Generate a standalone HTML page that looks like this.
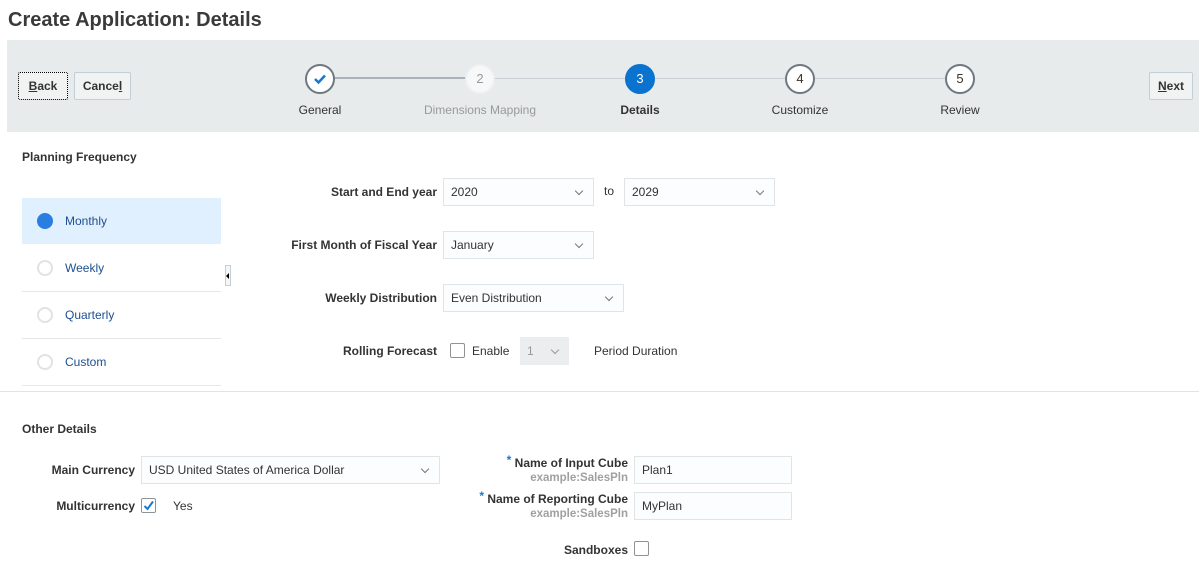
<!DOCTYPE html>
<html><head><style>
body{margin:0;width:1199px;height:575px;background:#fff;font-family:"Liberation Sans",Arial,sans-serif;font-size:12px;color:#333;position:relative;overflow:hidden}
.a{position:absolute}
.title{left:8px;top:9px;font-size:20px;font-weight:bold;color:#3a3a3a}
.band{left:7px;top:40px;width:1192px;height:92px;background:#e8ebec}
.btn{position:absolute;height:26px;border:1px solid #c4ced7;background:#f1f3f3;border-radius:2px;font-weight:bold;font-size:12px;line-height:26px;text-align:center;color:#333}
.circ{position:absolute;width:26px;height:26px;border-radius:50%;border:2px solid #6f7880;background:#fff;text-align:center;line-height:26px;font-size:13px;color:#333}
.lbl{position:absolute;width:160px;text-align:center;font-size:12px}
.line{position:absolute;top:77px;height:2px;background:#a9b2ba}
.sel{position:absolute;height:26px;border:1px solid #dfe4e7;background:#fcfdfe;box-sizing:border-box;padding-left:7px;line-height:25px;font-size:12px}
.chev{position:absolute;right:11px;top:8px;width:5px;height:5px;border-right:1px solid #777;border-bottom:1px solid #777;transform:rotate(45deg)}
.fl{position:absolute;font-weight:bold;text-align:right;font-size:12px}
.h{font-weight:bold;font-size:12px}
.item{position:absolute;left:22px;width:199px;height:46px;border-bottom:1px solid #e5e8ea;color:#1d4f91;font-size:12px;line-height:46px}
.item span.r{position:absolute;left:15px;top:15px;width:16px;height:16px;border-radius:50%;border:2px solid #e2e2e2;box-sizing:border-box}
.item span.t{position:absolute;left:43px}
.cb{position:absolute;width:15px;height:15px;border:1px solid #8d9499;border-radius:2px;background:#fff;box-sizing:border-box}
</style></head><body>
<div class="a title">Create Application: Details</div>
<div class="a band"></div>
<div class="btn" style="left:18px;top:72px;width:48px;border:1px dotted #000"><u>B</u>ack</div>
<div class="btn" style="left:74px;top:72px;width:55px">Cance<u>l</u></div>
<div class="btn" style="left:1149px;top:72px;width:42px"><u>N</u>ext</div>

<div class="line" style="left:334px;width:132px"></div>
<div class="line" style="left:494px;width:132px;background:#c8d0d6;height:1px;top:78px"></div>
<div class="line" style="left:654px;width:132px;background:#c8d0d6;height:1px;top:78px"></div>
<div class="line" style="left:814px;width:132px;background:#c8d0d6;height:1px;top:78px"></div>
<div class="circ" style="left:305px;top:64px"><svg width="14" height="12" viewBox="0 0 14 12" style="margin-top:7px"><path d="M2 6 L5.5 9.5 L12 2.5" stroke="#1979cf" stroke-width="2.5" fill="none"/></svg></div>
<div class="circ" style="left:465px;top:64px;border-color:#eef1f2;color:#999;background:#f7f8f8">2</div>
<div class="circ" style="left:625px;top:64px;border-color:#0a72cf;background:#0a72cf;color:#fff">3</div>
<div class="circ" style="left:785px;top:64px">4</div>
<div class="circ" style="left:945px;top:64px">5</div>
<div class="lbl" style="left:240px;top:103px">General</div>
<div class="lbl" style="left:400px;top:103px;color:#999">Dimensions Mapping</div>
<div class="lbl" style="left:560px;top:103px;font-weight:bold">Details</div>
<div class="lbl" style="left:720px;top:103px">Customize</div>
<div class="lbl" style="left:880px;top:103px">Review</div>

<div class="a h" style="left:22px;top:150px">Planning Frequency</div>
<div class="item" style="top:198px;background:#e1f0fe;border-bottom:none"><span class="r" style="background:#2a7de1;border:none"></span><span class="t">Monthly</span></div>
<div class="item" style="top:245px"><span class="r"></span><span class="t">Weekly</span></div>
<div class="item" style="top:292px"><span class="r"></span><span class="t">Quarterly</span></div>
<div class="item" style="top:339px"><span class="r"></span><span class="t">Custom</span></div>
<div class="a" style="left:225px;top:265px;width:6px;height:21px;border:1px solid #c4ced7;background:#f4f6f7;box-sizing:border-box"><div style="position:absolute;left:0;top:7px;border-right:3px solid #000;border-top:3px solid transparent;border-bottom:3px solid transparent"></div></div>

<div class="fl" style="left:240px;width:197px;top:185px">Start and End year</div>
<div class="sel" style="left:443px;top:178px;width:151px;height:28px;line-height:26px">2020<i class="chev" style="top:9px"></i></div>
<div class="a" style="left:604px;top:184px">to</div>
<div class="sel" style="left:624px;top:178px;width:151px;height:28px;line-height:26px">2029<i class="chev" style="top:9px"></i></div>
<div class="fl" style="left:240px;width:197px;top:238px">First Month of Fiscal Year</div>
<div class="sel" style="left:443px;top:231px;width:151px;height:28px;line-height:26px">January<i class="chev" style="top:9px"></i></div>
<div class="fl" style="left:240px;width:197px;top:291px">Weekly Distribution</div>
<div class="sel" style="left:443px;top:284px;width:181px;height:28px;line-height:26px">Even Distribution<i class="chev" style="top:9px"></i></div>
<div class="fl" style="left:240px;width:197px;top:344px">Rolling Forecast</div>
<div class="cb" style="left:450px;top:343px"></div>
<div class="a" style="left:472px;top:344px">Enable</div>
<div class="sel" style="left:520px;top:337px;width:49px;height:28px;background:#ebeeef;border:none;color:#999;line-height:28px">1<i class="chev" style="border-color:#999;top:10px"></i></div>
<div class="a" style="left:594px;top:344px">Period Duration</div>

<div class="a" style="left:0;top:391px;width:1199px;height:1px;background:#dfe4e7"></div>
<div class="a h" style="left:22px;top:422px">Other Details</div>
<div class="fl" style="left:20px;width:115px;top:463px">Main Currency</div>
<div class="sel" style="left:141px;top:456px;width:299px;height:28px;line-height:26px">USD United States of America Dollar<i class="chev" style="top:9px"></i></div>
<div class="fl" style="left:20px;width:115px;top:499px">Multicurrency</div>
<div class="cb" style="left:141px;top:498px"><svg width="13" height="13" viewBox="0 0 13 13" style="position:absolute;left:0;top:0"><path d="M2.5 7 L5.5 10 L11 2.5" stroke="#1979cf" stroke-width="2" fill="none"/></svg></div>
<div class="a" style="left:173px;top:499px">Yes</div>

<div class="fl" style="left:440px;width:188px;top:456px"><span style="color:#1979cf;position:relative;top:-3px">*</span> Name of Input Cube<br><span style="color:#a0a0a0;font-size:11.5px">example:SalesPln</span></div>
<div class="sel" style="left:634px;top:456px;width:158px;height:28px;line-height:26px">Plan1</div>
<div class="fl" style="left:440px;width:188px;top:492px"><span style="color:#1979cf;position:relative;top:-3px">*</span> Name of Reporting Cube<br><span style="color:#a0a0a0;font-size:11.5px">example:SalesPln</span></div>
<div class="sel" style="left:634px;top:492px;width:158px;height:28px;line-height:26px">MyPlan</div>
<div class="fl" style="left:440px;width:188px;top:543px">Sandboxes</div>
<div class="cb" style="left:634px;top:541px"></div>
</body></html>
